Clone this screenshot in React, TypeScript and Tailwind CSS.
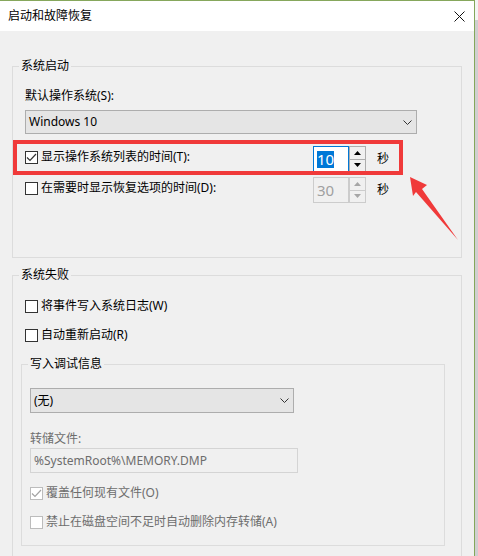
import React from "react";

const font = {
  fontFamily: '"Noto Sans", "Noto Sans CJK SC", sans-serif',
};

const Check = ({ checked, disabled }: { checked?: boolean; disabled?: boolean }) => {
  return (
    <div
      className={`flex h-[13px] w-[13px] shrink-0 items-center justify-center border ${
        disabled ? "border-[#bcbcbc] bg-white" : "border-[#333333] bg-white"
      }`}
    >
      {checked && (
        <svg width="11" height="11" viewBox="0 0 11 11">
          <polyline
            points="1,5.5 4,8.5 10,2"
            fill="none"
            stroke={disabled ? "#a3a3a3" : "#333333"}
            strokeWidth="1.2"
          />
        </svg>
      )}
    </div>
  );
};

const CheckRow = ({ label, checked, disabled }: any) => {
  return (
    <div className="flex h-[16px] items-center gap-[3px]">
      <Check checked={checked} disabled={disabled} />
      <span
        className={`text-[12px] leading-[16px] whitespace-nowrap ${
          disabled ? "text-[#6d6d6d]" : "text-black"
        }`}
      >
        {label}
      </span>
    </div>
  );
};

const Chevron = () => (
  <svg width="9" height="5" viewBox="0 0 9 5">
    <polyline points="0.5,0.5 4.5,4.5 8.5,0.5" fill="none" stroke="#333" strokeWidth="1" />
  </svg>
);

const Dropdown = ({ value, className }: any) => {
  return (
    <div
      className={`flex items-center justify-between border border-[#adadad] bg-[#e5e5e5] pl-[3px] pr-[4px] ${className}`}
    >
      <span className="text-[12px] leading-[16px] text-black">{value}</span>
      <Chevron />
    </div>
  );
};

const Tri = ({ up, color }: { up?: boolean; color: string }) => (
  <svg width="7" height="4" viewBox="0 0 7 4">
    <polygon points={up ? "0,4 7,4 3.5,0" : "0,0 7,0 3.5,4"} fill={color} />
  </svg>
);

const Spin = ({ value, active }: { value: string; active?: boolean }) => {
  return (
    <div className="flex h-[26px]">
      <div
        className={`flex w-[36px] items-center border pl-[3px] ${
          active ? "border-[#0078d7] bg-white" : "border-[#cccccc] bg-[#f0f0f0]"
        }`}
      >
        {active ? (
          <span className="bg-[#0078d7] text-[15px] leading-[17px] text-white">{value}</span>
        ) : (
          <span className="text-[15px] leading-[17px] text-[#a0a0a0]">{value}</span>
        )}
      </div>
      <div
        className={`flex w-[17px] flex-col border ${
          active ? "border-[#adadad]" : "border-[#cccccc]"
        }`}
      >
        <div
          className={`flex flex-1 items-center justify-center border-b ${
            active ? "border-[#adadad] bg-[#f0f0f0]" : "border-[#cccccc] bg-[#f0f0f0]"
          }`}
        >
          <Tri up color={active ? "#000" : "#a6a6a6"} />
        </div>
        <div className="flex flex-1 items-center justify-center bg-[#f0f0f0]">
          <Tri color={active ? "#000" : "#a6a6a6"} />
        </div>
      </div>
    </div>
  );
};

const TimeRow = ({ label, checked, value, active }: any) => {
  return (
    <div className="flex h-[26px] items-start">
      <div className="w-[288px] pt-[3px]">
        <CheckRow label={label} checked={checked} />
      </div>
      <Spin value={value} active={active} />
      <span className="ml-[11px] self-center text-[12px] leading-[16px] text-black">秒</span>
    </div>
  );
};

export default function App() {
  return (
    <div className="relative h-[556px] w-[478px] overflow-hidden bg-[#d0d0d0]" style={font}>
      <div className="flex h-full">
        <div className="flex w-[474px] shrink-0 flex-col border-t border-[#86a75c]">
          {/* title bar */}
          <div className="flex h-[30px] shrink-0 items-center justify-between bg-white pl-[8px] pr-[9px]">
            <span className="text-[12px] leading-[16px] text-black">启动和故障恢复</span>
            <svg width="11" height="11" viewBox="0 0 11 11">
              <path d="M0.5 0.5 L10.5 10.5 M10.5 0.5 L0.5 10.5" stroke="#111" strokeWidth="1" />
            </svg>
          </div>

          <div className="flex-1 bg-[#f0f0f0] pl-[12px] pt-[27px]">
            {/* 系统启动 */}
            <fieldset className="m-0 w-[450px] min-w-0 border border-[#dcdcdc] p-0">
              <legend className="ml-[6px] px-[2px] text-[12px] leading-[16px] text-black">
                系统启动
              </legend>
              <div className="pl-[12px] pt-[14px] pb-[54px]">
                <div className="text-[12px] leading-[16px] text-black">默认操作系统(S):</div>
                <Dropdown value="Windows 10" className="mt-[6px] h-[24px] w-[392px]" />
                <div className="mt-[12px]">
                  <TimeRow label="显示操作系统列表的时间(T):" checked value="10" active />
                </div>
                <div className="mt-[5px]">
                  <TimeRow label="在需要时显示恢复选项的时间(D):" value="30" />
                </div>
              </div>
            </fieldset>

            {/* 系统失败 */}
            <fieldset className="m-0 mt-[9px] w-[450px] min-w-0 border border-[#dcdcdc] p-0">
              <legend className="ml-[6px] px-[2px] text-[12px] leading-[16px] text-black">
                系统失败
              </legend>
              <div className="pl-[8px] pt-[15px] pb-[20px]">
                <div className="ml-[4px]">
                  <CheckRow label="将事件写入系统日志(W)" />
                </div>
                <div className="ml-[4px] mt-[13px]">
                  <CheckRow label="自动重新启动(R)" />
                </div>

                <fieldset className="m-0 mt-[13px] w-[424px] min-w-0 border border-[#dcdcdc] p-0">
                  <legend className="ml-[6px] px-[2px] text-[12px] leading-[16px] text-black">
                    写入调试信息
                  </legend>
                  <div className="pl-[8px] pt-[16px] pb-[15px]">
                    <Dropdown value="(无)" className="h-[25px] w-[264px]" />
                    <div className="mt-[18px] text-[12px] leading-[16px] text-[#6d6d6d]">转储文件:</div>
                    <div className="mt-[1px] flex h-[25px] w-[268px] items-center border border-[#d4d4d4] pl-[3px]">
                      <span className="text-[12px] leading-[16px] text-[#6d6d6d]">
                        %SystemRoot%\MEMORY.DMP
                      </span>
                    </div>
                    <div className="mt-[12px]">
                      <CheckRow label="覆盖任何现有文件(O)" checked disabled />
                    </div>
                    <div className="mt-[13px]">
                      <CheckRow label="禁止在磁盘空间不足时自动删除内存转储(A)" disabled />
                    </div>
                  </div>
                </fieldset>
              </div>
            </fieldset>
          </div>
        </div>
        <div className="w-px shrink-0 bg-[#84a75a]" />
        <div className="flex flex-1 flex-col">
          <div className="h-[20px] bg-[#f4f4f4]" />
          <div className="flex-1 bg-[#cfcfcf]" />
        </div>
      </div>

      {/* red annotation */}
      <svg className="pointer-events-none absolute left-0 top-0" width="478" height="556">
        <rect x="15" y="142" width="386" height="31" fill="none" stroke="#f03a3a" strokeWidth="4" />
        <polygon
          points="410,177 427,185 422,189 458,240 416,192 413,196"
          fill="#f03a3a"
        />
      </svg>
    </div>
  );
}
